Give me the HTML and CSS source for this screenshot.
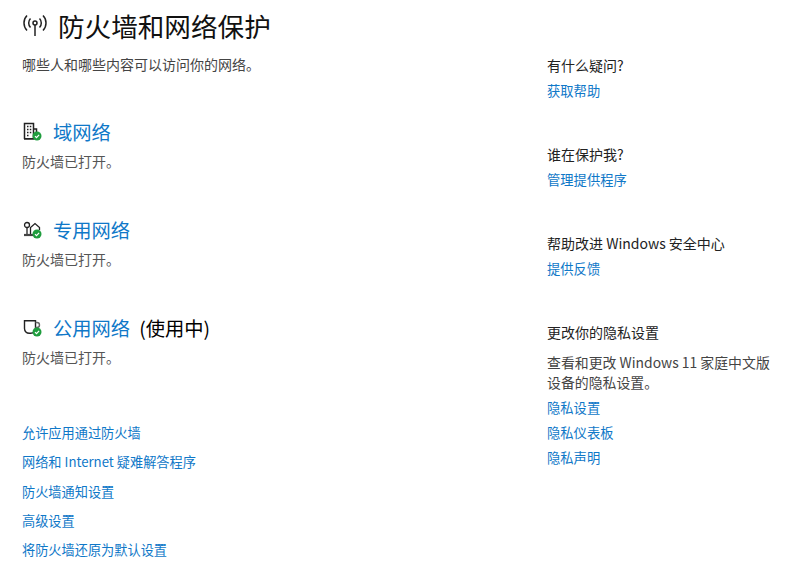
FILE: index.html
```html
<!DOCTYPE html>
<html lang="zh-CN">

<head>
    <meta charset="UTF-8">
    <title>防火墙和网络保护</title>
    <link rel="stylesheet" href="styles.css">
</head>

<body>
    <div class="page">
        <div class="main">
            <div class="title-row">
                <svg class="title-icon" viewBox="0 0 26 26" fill="none" stroke="#222" stroke-width="1.5">
                    <circle cx="13" cy="10" r="2"/>
                    <path d="M13 12v11"/>
                    <path d="M8.5 5.5c-2.4 2.4-2.4 6.6 0 9M17.5 5.5c2.4 2.4 2.4 6.6 0 9"/>
                    <path d="M5 2.5c-4 4-4 11 0 15M21 2.5c4 4 4 11 0 15"/>
                </svg>
                <h1>防火墙和网络保护</h1>
            </div>
            <p class="subtitle">哪些人和哪些内容可以访问你的网络。</p>

            <div class="networks">
                <div class="network">
                    <div class="network-head">
                        <svg class="net-icon" viewBox="0 0 20 20" fill="none" stroke="#222" stroke-width="1.5">
                            <path d="M1.500 17V1.500h9V17M10.500 7h3v3"/>
                            <path d="M4 4.500h1.500M6.800 4.500h1.500M4 7.500h1.500M6.800 7.500h1.500M4 10.500h1.500M6.800 10.500h1.500M4 13.500h1.500M1 16.800h10" stroke-width="1.700"/>
                            <circle cx="14" cy="14" r="4.500" fill="#1f9d3e" stroke="none"/>
                            <path d="M12 14.100l1.500 1.500 2.600-2.800" stroke="#fff" stroke-width="1.200"/>
                        </svg>
                        <a class="net-name" href="#">域网络</a>
                    </div>
                    <p class="net-status">防火墙已打开。</p>
                </div>
                <div class="network">
                    <div class="network-head">
                        <svg class="net-icon" viewBox="0 0 20 20" fill="none" stroke="#222" stroke-width="1.300">
                            <circle cx="4" cy="5" r="2.500"/>
                            <path d="M4 7.500V14M7.500 14V7.500l4.500-4 4.500 4V10"/>
                            <path d="M1 15h11" stroke-width="2.200" stroke="#444"/>
                            <circle cx="14" cy="14" r="4.500" fill="#1f9d3e" stroke="none"/>
                            <path d="M12 14.100l1.500 1.500 2.600-2.800" stroke="#fff" stroke-width="1.200"/>
                        </svg>
                        <a class="net-name" href="#">专用网络</a>
                    </div>
                    <p class="net-status">防火墙已打开。</p>
                </div>
                <div class="network">
                    <div class="network-head">
                        <svg class="net-icon" viewBox="0 0 20 20" fill="none" stroke="#222" stroke-width="1.400">
                            <path d="M1.500 2.700h11v7.800c0 2.800-2 4.700-4.800 4.700H6.300c-2.800 0-4.800-1.900-4.800-4.700z"/>
                            <path d="M12.500 4.500h1.500a2.500 2.500 0 0 1 0 5h-1.500" stroke="#666"/>
                            <circle cx="14" cy="14" r="4.500" fill="#1f9d3e" stroke="none"/>
                            <path d="M12 14.100l1.500 1.500 2.600-2.800" stroke="#fff" stroke-width="1.200"/>
                        </svg>
                        <a class="net-name" href="#">公用网络</a>
                        <span class="net-active">(使用中)</span>
                    </div>
                    <p class="net-status">防火墙已打开。</p>
                </div>
            </div>

            <div class="links">
                <a href="#">允许应用通过防火墙</a>
                <a href="#">网络和 Internet 疑难解答程序</a>
                <a href="#">防火墙通知设置</a>
                <a href="#">高级设置</a>
                <a href="#">将防火墙还原为默认设置</a>
            </div>
        </div>

        <div class="side">
            <div class="side-block">
                <h3>有什么疑问?</h3>
                <a href="#">获取帮助</a>
            </div>
            <div class="side-block">
                <h3>谁在保护我?</h3>
                <a href="#">管理提供程序</a>
            </div>
            <div class="side-block">
                <h3>帮助改进 Windows 安全中心</h3>
                <a href="#">提供反馈</a>
            </div>
            <div class="side-block">
                <h3>更改你的隐私设置</h3>
                <p>查看和更改 Windows 11 家庭中文版<br>设备的隐私设置。</p>
                <a href="#">隐私设置</a>
                <a href="#">隐私仪表板</a>
                <a href="#">隐私声明</a>
            </div>
        </div>
    </div>
</body>

</html>
```

FILE: styles.css
```css
html, body {
    height: 100%;
}

body {
    margin: 0;
    overflow: hidden;
    background-color: #ffffff;
    color: #1a1a1a;
    font-family: "Noto Sans CJK SC", "Noto Sans", sans-serif;
    font-size: 13.3px;
}

a {
    color: #0f78c8;
    text-decoration: none;
}

.page {
    display: flex;
    padding-left: 22px;
}

.main {
    width: 525px;
}

.title-row {
    display: flex;
    align-items: center;
    height: 52px;
}

.title-icon {
    width: 26px;
    height: 26px;
    margin-right: 10px;
}

h1 {
    margin: 0;
    font-size: 26.6px;
    font-weight: 400;
    line-height: 52px;
    color: #111;
}

.subtitle {
    margin: 1.5px 0 0;
    font-size: 14px;
    line-height: 20px;
    color: #444;
}

.networks {
    margin-top: 45.5px;
}

.network {
    height: 98px;
}

.network-head {
    display: flex;
    align-items: center;
    height: 26px;
}

.net-icon {
    width: 20px;
    height: 20px;
    margin-left: 1px;
    margin-right: 10px;
}

.net-name {
    font-size: 19.3px;
    line-height: 26px;
}

.net-active {
    margin-left: 9px;
    font-size: 19.3px;
    line-height: 26px;
    color: #000;
}

.net-status {
    margin: 6px 0 0;
    font-size: 14px;
    line-height: 20px;
    color: #555;
}

.links {
    display: flex;
    flex-direction: column;
    margin-top: 10px;
    gap: 9.3px;
}

.links a {
    font-size: 13.2px;
    line-height: 20px;
}

.side {
    width: 245px;
    padding-top: 55px;
}

.side-block {
    display: flex;
    flex-direction: column;
    align-items: flex-start;
    height: 89px;
}

.side-block h3 {
    margin: 0 0 6px;
    font-size: 14px;
    font-weight: 400;
    line-height: 20px;
    color: #222;
}

.side-block p {
    margin: 4px 0 6px;
    font-size: 13.9px;
    line-height: 20px;
    color: #444;
}

.side-block a {
    line-height: 20px;
    margin-bottom: 5px;
}
```
